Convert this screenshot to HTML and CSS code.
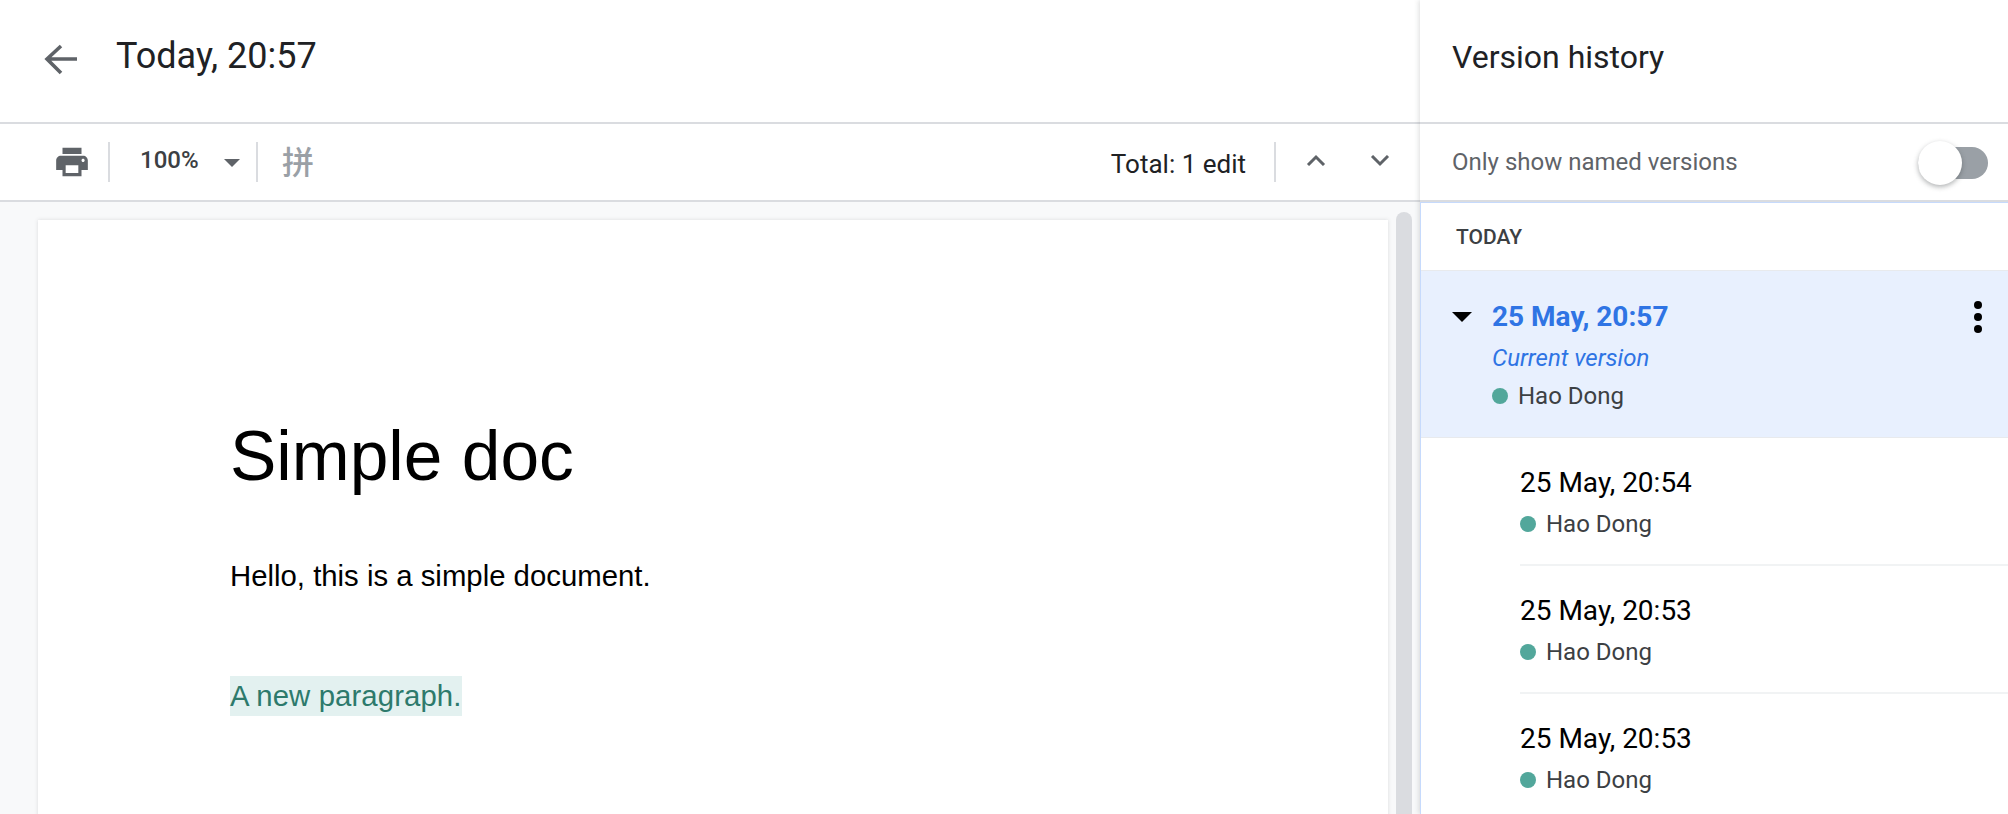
FILE: index.html
```html
<!DOCTYPE html>
<html lang="en">
<head>
<meta charset="utf-8">
<title>Version history</title>
<link rel="stylesheet" href="styles.css">
</head>
<body>
<div class="app">
  <main class="main">
    <header class="topbar">
      <svg class="back" viewBox="0 0 36 36" width="36" height="36"><path d="M34 16H4M18 3 4 16l14 14" fill="none" stroke="#5f6368" stroke-width="3.6"/></svg>
      <h1 class="doc-title">Today, 20:57</h1>
    </header>
    <div class="toolbar">
      <svg class="printer" viewBox="0 0 24 24" width="38" height="38"><path fill="#5f6368" d="M19 8H5c-1.66 0-3 1.34-3 3v6h4v4h12v-4h4v-6c0-1.66-1.34-3-3-3zm-3 11H8v-5h8v5zm3-7c-.55 0-1-.45-1-1s.45-1 1-1 1 .45 1 1-.45 1-1 1zm-1-9H6v4h12V3z"/></svg>
      <span class="tb-div first"></span>
      <span class="zoom-val">100%</span>
      <span class="caret"></span>
      <span class="tb-div second"></span>
      <span class="pinyin">拼</span>
      <span class="total">Total: 1 edit</span>
      <span class="tb-div third"></span>
      <svg class="chev up" viewBox="0 0 20 12" width="20" height="12"><path d="M2 11 10 3l8 8" fill="none" stroke="#5f6368" stroke-width="3"/></svg>
      <svg class="chev down" viewBox="0 0 20 12" width="20" height="12"><path d="M2 1l8 8 8-8" fill="none" stroke="#5f6368" stroke-width="3"/></svg>
    </div>
    <div class="canvas">
      <article class="page">
        <h2 class="doc-h">Simple doc</h2>
        <p class="doc-p">Hello, this is a simple document.</p>
        <p class="doc-new"><span class="added">A new paragraph.</span></p>
      </article>
      <div class="scrollbar"></div>
    </div>
  </main>
  <aside class="side">
    <div class="side-head">Version history</div>
    <div class="side-filter">
      <span class="filter-label">Only show named versions</span>
      <span class="toggle"><span class="knob"></span></span>
    </div>
    <div class="list">
      <div class="day">TODAY</div>
      <div class="current">
        <div class="cur-date"><span class="tri"></span><span>25 May, 20:57</span></div>
        <div class="cur-note">Current version</div>
        <div class="author cur-author"><span class="dot"></span>Hao Dong</div>
        <svg class="more" viewBox="0 0 8 32" width="8" height="32"><circle cx="4" cy="4" r="4"/><circle cx="4" cy="16" r="4"/><circle cx="4" cy="28" r="4"/></svg>
      </div>
      <div class="ver"><div class="ver-date">25 May, 20:54</div><div class="author"><span class="dot"></span>Hao Dong</div></div>
      <div class="ver"><div class="ver-date">25 May, 20:53</div><div class="author"><span class="dot"></span>Hao Dong</div></div>
      <div class="ver"><div class="ver-date">25 May, 20:53</div><div class="author"><span class="dot"></span>Hao Dong</div></div>
    </div>
  </aside>
</div>
</body>
</html>
```
FILE: styles.css
```css
* { box-sizing: border-box; }
html, body { margin: 0; height: 100%; overflow: hidden; background: #fff; }
body { font-family: Roboto, "Noto Sans CJK SC", sans-serif; color: #202124; }
.app { display: flex; width: 2008px; height: 814px; }

.main { width: 1420px; display: flex; flex-direction: column; flex: none; }
.topbar { height: 124px; border-bottom: 2px solid #dadce0; display: flex; align-items: center; padding: 0 0 2px 43px; flex: none; }
.back { margin-top: 2px; flex: none; }
.doc-title { margin: 0 0 8px 37px; font-size: 36px; font-weight: 400; letter-spacing: 0; line-height: 40px; }

.toolbar { height: 78px; border-bottom: 2px solid #dadce0; display: flex; align-items: center; flex: none; padding-left: 53px; }
.printer { flex: none; }
.tb-div { width: 2px; height: 40px; background: #dadce0; flex: none; }
.tb-div.first { margin-left: 17px; }
.zoom-val { margin-left: 30px; width: 84px; font-size: 24px; font-weight: 500; color: #3c4043; margin-bottom: 4px; flex: none; }
.caret { width: 0; height: 0; border-left: 8px solid transparent; border-right: 8px solid transparent; border-top: 8px solid #5f6368; margin-top: 2px; flex: none; }
.tb-div.second { margin-left: 16px; }
.pinyin { margin-left: 24px; font-size: 32px; font-weight: 500; color: #9aa0a6; font-family: "Noto Sans CJK SC", sans-serif; line-height: 40px; margin-bottom: 5px; flex: none; }
.total { margin-left: auto; font-size: 26px; color: #202124; line-height: 32px; margin-top: 4px; }
.tb-div.third { margin-left: 28px; }
.chev { flex: none; }
.chev.up { margin-left: 30px; margin-bottom: 4px; }
.chev.down { margin-left: 44px; margin-right: 30px; margin-bottom: 2px; }

.canvas { flex: 1; min-height: 0; background: #f8f9fa; display: flex; align-items: flex-start; padding: 18px 8px 0 38px; overflow: hidden; }
.page { width: 1350px; height: 700px; background: #fff; box-shadow: 0 0 4px rgba(60,64,67,.16); padding: 0 0 0 192px; flex: none; color: #000; font-family: "Liberation Sans", Arial, sans-serif; }
.doc-h { margin: 0; padding-top: 196px; font-size: 69.5px; font-weight: 400; line-height: 80px; }
.doc-p { margin: 60px 0 0; font-size: 29.33px; line-height: 40px; }
.doc-new { margin: 80px 0 0; font-size: 29.33px; line-height: 40px; }
.added { display: inline-block; height: 40px; letter-spacing: .1px; background: #e3f1f0; color: #2d7a6c; }
.scrollbar { width: 16px; height: 700px; background: #dadce0; border-radius: 8px; margin: -8px 0 0 8px; flex: none; }

.side { width: 588px; flex: none; display: flex; flex-direction: column; position: relative; box-shadow: -1px 0 5px rgba(60,64,67,.18); background: #fff; }
.side-head { height: 124px; border-bottom: 2px solid #dadce0; padding-left: 32px; font-size: 32px; line-height: 114px; flex: none; }
.side-filter { height: 78px; border-bottom: 2px solid #dadce0; padding: 0 20px 0 32px; display: flex; align-items: center; justify-content: space-between; flex: none; }
.filter-label { font-size: 24px; color: #5f6368; }
.toggle { position: relative; width: 70px; height: 32px; background: #9aa0a6; border-radius: 16px; margin-top: 2px; }
.knob { position: absolute; left: 0; top: -6px; width: 44px; height: 44px; border-radius: 50%; background: #fff; box-shadow: 0 2px 5px rgba(60,64,67,.4); }

.list { flex: 1; min-height: 0; border-left: 1px solid #c6dafc; border-top: 1px solid #c6dafc; overflow: hidden; }
.day { height: 67px; padding-left: 35px; font-size: 21px; font-weight: 500; color: #3c4043; line-height: 68px; }
.current { position: relative; height: 168px; background: #e8f0fe; padding: 29px 0 0 31px; border-top: 1px solid #e8eaed; border-bottom: 1px solid #e8eaed; }
.cur-date { display: flex; align-items: center; font-size: 28px; font-weight: 700; color: #2f74e4; line-height: 34px; }
.tri { width: 0; height: 0; border-left: 10px solid transparent; border-right: 10px solid transparent; border-top: 10px solid #000; margin-right: 20px; }
.cur-note { margin: 9px 0 0 40px; font-size: 24px; font-style: italic; color: #2f74e4; line-height: 30px; }
.author { display: flex; align-items: center; font-size: 24px; color: #3c4043; line-height: 32px; }
.cur-author { margin: 7px 0 0 40px; }
.dot { width: 16px; height: 16px; border-radius: 50%; background: #52a79b; margin-right: 10px; flex: none; }
.more { position: absolute; right: 26px; top: 30px; }
.ver { height: 128px; margin-left: 99px; padding-top: 28px; border-bottom: 2px solid #f1f3f4; }
.ver-date { font-size: 28px; color: #000; line-height: 34px; margin-bottom: 8px; }
```
